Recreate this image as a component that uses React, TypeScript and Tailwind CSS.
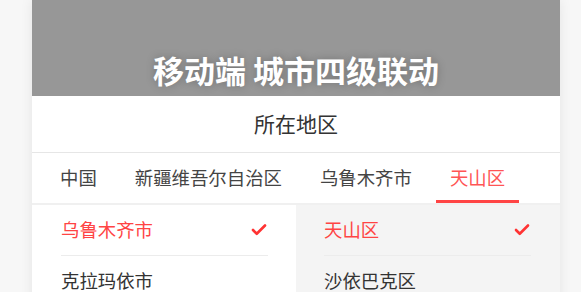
import React from "react";
import { Check } from "lucide-react";

const tabs = [
  { name: "中国", active: false },
  { name: "新疆维吾尔自治区", active: false },
  { name: "乌鲁木齐市", active: false },
  { name: "天山区", active: true },
];

const left = [
  { name: "乌鲁木齐市", active: true },
  { name: "克拉玛依市", active: false },
  { name: "吐鲁番市", active: false },
];
const right = [
  { name: "天山区", active: true },
  { name: "沙依巴克区", active: false },
  { name: "新市区", active: false },
];

function Item({ name, active, pl, pr }: { name: string; active: boolean; pl: string; pr: string }) {
  return (
    <div className={`${pl} ${pr}`}>
      <div className="flex h-[51px] items-center justify-between border-b border-[#ececec]">
        <span className={`text-[18.4px] ${active ? "text-[#f44]" : "text-[#333]"}`}>{name}</span>
        {active && <Check size={18} strokeWidth={3.5} className="text-[#f33]" />}
      </div>
    </div>
  );
}

export default function App() {
  return (
    <div
      className="h-[292px] w-full overflow-hidden bg-[#f7f7f7]"
      style={{ fontFamily: '"Noto Sans CJK SC", "Noto Sans", sans-serif' }}
    >
      <div className="ml-[32px] w-[528px] bg-white shadow-[0_0_12px_rgba(0,0,0,0.08)]">
        <div className="flex h-[96px] items-end justify-center bg-[#979797] pb-[6px]">
          <h1 className="text-[31px] font-bold leading-[40px] text-white [text-shadow:0_0_8px_rgba(0,0,0,0.25)]">
            移动端 城市四级联动
          </h1>
        </div>
        <div className="flex h-[57px] items-center justify-center border-b border-[#e6e6e6] text-[21px] text-[#333]">
          所在地区
        </div>
        <div className="flex h-[52px] items-stretch gap-[10px] border-b-[2px] border-[#f0f0f0] pl-[14px]">
          {tabs.map((t) => (
            <div
              key={t.name}
              className={`flex items-center px-[14px] pt-[3px] text-[18.4px] ${
                t.active ? "border-b-[3px] border-[#f44] text-[#f55]" : "border-b-[3px] border-transparent text-[#444]"
              }`}
            >
              {t.name}
            </div>
          ))}
        </div>
        <div className="grid grid-cols-2">
          <div className="bg-white">
            {left.map((i) => (
              <Item key={i.name} {...i} pl="pl-[29px]" pr="pr-[28px]" />
            ))}
          </div>
          <div className="bg-[#f4f4f4]">
            {right.map((i) => (
              <Item key={i.name} {...i} pl="pl-[28px]" pr="pr-[29px]" />
            ))}
          </div>
        </div>
      </div>
    </div>
  );
}
